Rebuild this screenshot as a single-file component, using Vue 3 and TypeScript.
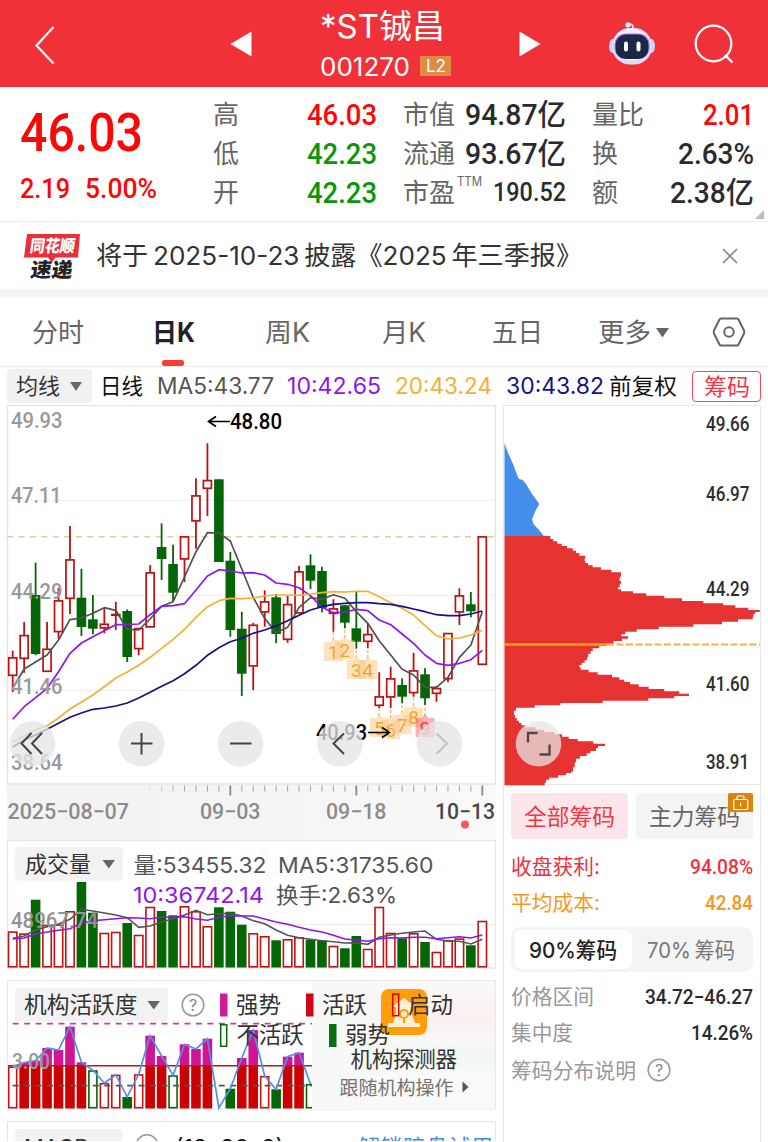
<script setup lang="ts">
import { h } from 'vue'

// Single line of text set to an exact measure
interface FitProps { t: string; w: number; s: number }
const FitText = (p: FitProps) =>
  h('svg', { width: p.w, height: p.s, viewBox: `0 0 ${p.w} ${p.s}`, overflow: 'visible' }, [
    h('text', { x: 0, y: p.s * 0.865, 'font-size': p.s, textLength: p.w, lengthAdjust: 'spacingAndGlyphs', fill: 'currentColor', 'xml:space': 'preserve' }, p.t),
  ])

const X0 = 12.7
const STEP = 11.454
const cx = (i: number) => X0 + i * STEP

// kind (1 = rising), high, body top, body bottom, low
const candles: number[][] = [
  [1, 650.7, 657.3, 675.7, 692], [1, 622, 635, 658.7, 672.7], [0, 562.7, 595, 654, 655.3], [1, 622, 648.7, 671.7, 671.7],
  [1, 588, 600.3, 632, 638.7], [1, 526, 559.3, 598.7, 614], [0, 568.7, 597.7, 627, 636], [0, 595, 619.3, 628.7, 634.3],
  [1, 607.7, 623.7, 628.3, 633.3], [1, 601.7, 614, 615.6, 630], [0, 609.3, 611, 657, 662], [1, 628, 628, 649, 655.3],
  [1, 565, 572.3, 627.3, 627.3], [0, 523.3, 547, 559, 580], [0, 544.7, 564, 592.7, 601], [1, 536.3, 536.3, 559.3, 582],
  [1, 478.3, 495.3, 521.3, 548.7], [1, 443.3, 480, 488.7, 516], [0, 479.3, 479.3, 562, 562], [0, 552, 560.7, 630, 636.7],
  [0, 611.7, 628.7, 673.7, 696], [1, 622.7, 624.7, 666.3, 690], [1, 590.3, 601.3, 612.3, 626.7], [0, 594, 597.3, 634, 643.3],
  [1, 596, 604, 639.7, 642.7], [1, 565.7, 571.3, 613.3, 613.3], [0, 554.3, 565.3, 580.7, 589], [0, 566.7, 571, 608, 612.3],
  [1, 599.3, 608.3, 613.7, 631.7], [0, 605.3, 605.3, 622.7, 628.3], [0, 592, 628.3, 641.7, 648.7], [1, 623, 634, 641.7, 648.3],
  [1, 672.3, 696.3, 705.7, 708], [1, 666.7, 678.3, 697.3, 708], [0, 678.3, 685, 696.7, 703.3], [1, 652.7, 670.3, 693, 696.7],
  [0, 668.3, 674.3, 698.3, 705], [1, 686, 688, 693.7, 701.7], [1, 633, 633, 679, 682.3], [1, 588.3, 595.3, 612.3, 625],
  [0, 592, 604.3, 611.3, 617.3], [1, 536.3, 536.3, 664.7, 664.7],
]
const ma5 = [688, 669, 662, 655, 640, 619.7, 618, 613.3, 607.7, 610.3, 629.3, 630, 619, 606.3, 601.7, 577, 551.7, 532.7, 533, 541, 569, 597.3, 618.3, 632.7, 627.3, 607.3, 597.7, 599.3, 594.7, 598.3, 611.7, 623.3, 640.7, 655, 669.3, 675, 687.3, 687.3, 677.3, 657.3, 645, 611.7]
const ma10 = [719.3, 706.7, 697.7, 688.3, 671.7, 653.3, 643, 636.7, 630.7, 624.7, 624.5, 624, 614.7, 606.3, 605.7, 603.7, 590, 576, 569.7, 571, 573, 572.7, 575, 583, 584.3, 587.7, 595.7, 607.3, 612.7, 612.3, 609.3, 610.7, 620, 624.7, 634, 643.3, 655, 663.3, 665.3, 663.3, 659.7, 650.3]
const ma20 = [742.3, 735.7, 730, 725.7, 718, 709, 702, 695, 686.7, 678, 672, 665.3, 657.3, 648.3, 639.3, 629.3, 617.3, 606.7, 600.7, 598.3, 598.6, 598, 596, 595, 595, 595.3, 594, 592.7, 591.7, 592, 591.3, 591.3, 596.7, 602.7, 608.3, 615, 625.7, 635.7, 639, 638, 635, 630.3]
const ma30 = [747, 740, 735, 729.3, 723.3, 717.3, 713, 709.3, 708, 706, 703, 698, 692.3, 686.3, 680.7, 673.7, 665.3, 655.3, 647.7, 641.7, 638.3, 633.3, 630, 626, 620.7, 615.3, 610, 606.7, 604.3, 603.3, 602.7, 602.7, 603.7, 604.3, 606.3, 609, 611.7, 614.7, 615.7, 615.7, 614, 611]
const line = (ys: number[]) => ys.map((y, i) => `${cx(i).toFixed(1)},${y}`).join(' ')

const volumes: number[] = [931.3, 933.3, 899.7, 924.7, 924.3, 911, 882, 912.7, 932.7, 931.7, 923, 934.7, 906.7, 911, 915.3, 906, 911, 926, 907.3, 911.7, 924.7, 933, 936, 940.3, 939, 937, 939.7, 940.3, 945.7, 948.3, 936, 948.7, 906.7, 932.7, 938.3, 933, 942, 951.7, 940, 938.3, 945.3, 920.7]
const vma5 = [938.3, 936, 930, 926.7, 924, 919.3, 909.3, 911, 913, 915, 917.7, 927.3, 926, 922, 918.7, 915, 910.3, 914.7, 913.7, 913.3, 916, 920.7, 923.7, 930, 935.3, 937.7, 939.3, 940.7, 941.7, 943, 942.7, 944.3, 937.3, 935, 933.3, 932, 931, 939.3, 941, 941.2, 944, 939.3]
const vma10 = [939, 938, 934, 932, 930.3, 928.7, 923, 920.7, 919.7, 918.7, 917.7, 918, 918.7, 917.3, 917, 916.7, 919, 920.3, 917.3, 915.7, 916, 916, 919, 922, 924.3, 927.3, 930, 932, 935.3, 939, 940, 941.3, 938.7, 937.7, 938, 937.3, 937.3, 938.7, 937.7, 936.7, 938, 935]

// f = filled active, r = outlined red, o = outlined green, g = filled green, n = none
const activity: [string, number][] = [['r', 1066.5], ['f', 1062.7], ['f', 1060.7], ['f', 1048], ['f', 1050], ['f', 1026.7], ['f', 1062.3], ['o', 1070.3], ['r', 1083], ['r', 1074.7], ['g', 1097], ['r', 1074.3], ['f', 1035.7], ['f', 1056], ['o', 1075.3], ['f', 1044.3], ['f', 1049], ['f', 1038.7], ['n', 1108], ['g', 1088.7], ['f', 1058], ['f', 1030], ['r', 1076], ['g', 1089.3], ['f', 1056.7], ['f', 1052.7], ['o', 1084]]

const td: [string, number, number][] = [['1', 28, 652], ['2', 29, 650], ['3', 30, 670], ['4', 31, 670], ['5', 32, 728], ['6', 33, 730], ['7', 34, 725], ['8', 35, 717.5], ['9', 36, 728]]

const chips: [number, number][] = [[408, 163], [417, 172], [424, 184], [431, 197], [438, 213], [445, 230], [452, 240], [459, 250], [467, 268], [475, 266], [483, 268], [489, 276], [496, 290], [502, 315], [509, 346], [517, 375], [530, 371], [543, 375], [551, 371], [562, 366], [568, 375], [574, 411], [580, 451], [587, 505], [595, 558], [603, 622], [610, 682], [616, 718], [623, 757], [630, 791], [636, 777], [642, 772], [651, 770], [658, 726], [665, 678], [673, 592], [680, 488], [688, 422], [695, 388], [703, 376], [709, 396], [716, 378], [723, 352], [731, 330], [738, 310], [745, 290], [753, 284], [761, 277], [772, 273], [781, 266], [788, 257], [795, 250], [802, 254], [809, 278], [817, 305], [824, 348], [832, 370], [839, 385], [846, 402], [853, 428], [860, 458], [867, 505], [874, 550], [881, 579], [888, 535], [895, 457], [902, 320], [909, 193], [916, 116], [923, 60], [932, 54], [945, 57], [954, 62], [962, 69], [969, 76], [976, 88], [982, 118], [989, 145], [996, 175], [1003, 198], [1010, 218], [1017, 245], [1024, 292], [1031, 327], [1038, 306], [1045, 300], [1053, 283], [1060, 272], [1068, 252], [1076, 240], [1087, 236], [1102, 231], [1115, 225], [1119, 210], [1126, 186], [1133, 160], [1139, 150], [1148, 146], [1156, 146]]
const px = (v: number) => (496 + v / 3).toFixed(1)
const py = (v: number) => (400 + v / 3).toFixed(1)
const chipPath = `M504.5 ${py(408)}` + chips.map(([y, x]) => `V${py(y)}H${px(x)}`).join('').replace(/^V[\d.]+/, '') + 'H504.5Z'

const tabs = [{ t: '分时', w: 52 }, { t: '日K', w: 43 }, { t: '周K', w: 45 }, { t: '月K', w: 44 }, { t: '五日', w: 51 }]
const ticks = Array.from({ length: 30 }, (_, i) => i + 12)
</script>

<template>
  <div class="app">
    <header class="top">
      <svg class="back" width="20" height="40" viewBox="0 0 20 40"><path d="M18.5 2 1.5 20.500 18.500 38.500" fill="none" stroke="#fff" stroke-width="2.200" /></svg>
      <svg class="prev" width="22" height="26" viewBox="0 0 22 26"><path d="M21.500.5v25L.5 13Z" fill="#fff" /></svg>
      <div class="name">
        <FitText t="*ST铖昌" :w="125" :s="33" />
        <div class="code"><FitText t="001270" :w="90" :s="26" /><span class="l2"><FitText t="L2" :w="20" :s="17" /></span></div>
      </div>
      <svg class="next" width="22" height="26" viewBox="0 0 22 26"><path d="M.5.5v25L21.500 13Z" fill="#fff" /></svg>
      <svg class="robot" width="48" height="46" viewBox="608 21 48 46">
        <path d="M632.500 29q2-5-4-5" fill="none" stroke="#e5e0fa" stroke-width="1.800" />
        <circle cx="628" cy="24.800" r="2.600" fill="#f3efff" />
        <ellipse cx="612.500" cy="46" rx="3.500" ry="7" fill="#c9d2fa" /><ellipse cx="651.500" cy="46" rx="3.500" ry="7" fill="#c9d2fa" />
        <rect x="612" y="28" width="40" height="36.500" rx="18" fill="#dcdcf8" />
        <rect x="614" y="28.500" width="35" height="32" rx="16" fill="#f1effd" />
        <rect x="614.500" y="33.500" width="35" height="25.500" rx="11" fill="#a57bf0" />
        <rect x="615.500" y="34.500" width="33" height="24.500" rx="10.500" fill="#1c2746" />
        <rect x="624" y="41.500" width="4" height="10" rx="2" fill="#fff" /><rect x="636.500" y="41.500" width="4" height="10" rx="2" fill="#fff" />
      </svg>
      <svg class="search" width="42" height="42" viewBox="693 23 42 42"><circle cx="713.500" cy="43.500" r="17.800" fill="none" stroke="#fff" stroke-width="2.200" /><path d="m725 55 7.500 7.500" stroke="#fff" stroke-width="2.400" /></svg>
    </header>

    <section class="quote">
      <div class="price din red">
        <FitText t="46.03" :w="123" :s="54" />
        <div class="delta"><FitText t="2.19" :w="50" :s="28" /><FitText t="5.00%" :w="72" :s="28" /></div>
      </div>
      <div class="stats s1">
        <div><FitText class="lab" t="高" :w="26" :s="26" /><FitText class="din red" t="46.03" :w="70" :s="29.5" /></div>
        <div><FitText class="lab" t="低" :w="26" :s="26" /><FitText class="din green" t="42.23" :w="70" :s="29.5" /></div>
        <div><FitText class="lab" t="开" :w="26" :s="26" /><FitText class="din green" t="42.23" :w="70" :s="29.5" /></div>
      </div>
      <div class="stats s2">
        <div><FitText class="lab" t="市值" :w="52" :s="26" /><FitText class="din" t="94.87亿" :w="101" :s="29.5" /></div>
        <div><FitText class="lab" t="流通" :w="52" :s="26" /><FitText class="din" t="93.67亿" :w="101" :s="29.5" /></div>
        <div><span class="pe"><FitText class="lab" t="市盈" :w="52" :s="26" /><FitText class="lab ttm" t="TTM" :w="25" :s="13" /></span><FitText class="din" t="190.52" :w="73" :s="25" /></div>
      </div>
      <div class="stats s3">
        <div><FitText class="lab" t="量比" :w="52" :s="26" /><FitText class="din red" t="2.01" :w="51" :s="29.5" /></div>
        <div><FitText class="lab" t="换" :w="26" :s="26" /><FitText class="din" t="2.63%" :w="76" :s="29.5" /></div>
        <div><FitText class="lab" t="额" :w="26" :s="26" /><FitText class="din" t="2.38亿" :w="84" :s="29.5" /></div>
      </div>
      <i class="corner"></i>
    </section>

    <section class="notice">
      <svg width="56" height="48" viewBox="23.500 230.500 56 48" overflow="visible">
        <path d="M26.500 232.500h53l-2 23.500H55l-4 5-3.500-5h-24Z" fill="#e93038" />
        <g font-weight="900" transform="skewX(-8)"><text x="64" y="250.500" font-size="17" fill="#fff" textLength="45" lengthAdjust="spacingAndGlyphs">同花顺</text>
        <text x="68" y="275.500" font-size="20" fill="#222" textLength="42" lengthAdjust="spacingAndGlyphs">速递</text></g>
      </svg>
      <FitText class="headline" t="将于&#8201;2025-10-23&#8201;披露《2025&#8201;年三季报》" :w="486" :s="26" />
      <svg class="close" width="16" height="16" viewBox="0 0 16 16"><path d="m1 1 14 14m0-14L1 15" stroke="#888" stroke-width="1.700" /></svg>
    </section>

    <nav class="tabs">
      <span v-for="(tab, i) in tabs" :key="tab.t" :class="{ on: i === 1 }"><FitText :t="tab.t" :w="tab.w" :s="26.500" /></span>
      <span class="more"><FitText t="更多" :w="53" :s="26.500" /><svg width="13" height="10" viewBox="0 0 13 10"><path d="M0 0h13L6.500 9.500Z" fill="#666" /></svg></span>
      <svg width="34" height="32" viewBox="0 0 34 32"><path d="M9 2.500h16q1 0 1.500 1L32 14.500q.6 1.500 0 3l-5.500 11q-.5 1-1.500 1H9q-1 0-1.500-1L2 17.500q-.6-1.500 0-3l5.500-11q.5-1 1.500-1Z" fill="none" stroke="#666" stroke-width="2" /><circle cx="17" cy="16" r="4.800" fill="none" stroke="#666" stroke-width="2" /></svg>
    </nav>

    <div class="mabar">
      <span class="pick"><FitText t="均线" :w="44" :s="22" /><svg width="12" height="9" viewBox="0 0 12 9"><path d="M0 0h12L6 9Z" fill="#666" /></svg></span>
      <FitText class="black" t="日线" :w="43" :s="22" />
      <FitText class="c5" t="MA5:43.77" :w="117" :s="22.500" />
      <FitText class="c10" t="10:42.65" :w="94" :s="22.500" />
      <FitText class="c20" t="20:43.24" :w="97" :s="22.500" />
      <FitText class="c30" t="30:43.82" :w="98" :s="22.500" />
      <FitText class="black" t="前复权" :w="68" :s="22" />
      <span class="chipbtn"><FitText t="筹码" :w="46" :s="23" /></span>
    </div>

    <main class="board">
      <div class="left">
        <svg class="kline" width="496" height="435" viewBox="0 405 496 435">
          <defs>
            <linearGradient id="axisbg"><stop offset="0" stop-color="#f3f3f3" /><stop offset=".3" stop-color="#f3f3f3" /><stop offset="1" stop-color="#f9f9f9" /></linearGradient>
          </defs>
          <rect x="7" y="784" width="489" height="56" fill="url(#axisbg)" />
          <rect x="7.500" y="405.500" width="488" height="378.500" fill="#fff" stroke="#e4e4e4" stroke-width="1.400" />
          <path d="M8 500.300H495M8 595.300H495M8 690.300H495" stroke="#ededed" />
          <path d="M7 536.700H495" stroke="#e3c9a4" stroke-width="1.400" stroke-dasharray="6 5.450" />
          <g v-for="(c, i) in candles" :key="i">
            <template v-if="c[0]">
              <path :d="`M${cx(i)} ${c[1]}V${c[2]}M${cx(i)} ${c[3]}V${c[4]}`" stroke="#bd1111" stroke-width="1.800" />
              <rect :x="cx(i) - 4" :y="c[2] + .6" width="8" :height="Math.max(.4, c[3] - c[2] - 1)" fill="#fff" stroke="#bd1111" stroke-width="1.700" />
            </template>
            <template v-else>
              <path :d="`M${cx(i)} ${c[1]}V${c[4]}`" stroke="#066506" stroke-width="1.800" />
              <rect :x="cx(i) - 4.800" :y="c[2]" width="9.600" :height="c[3] - c[2]" fill="#066506" />
            </template>
          </g>
          <g font-size="19" text-anchor="middle" class="dinr">
            <g v-for="b in td" :key="b[0]">
              <path :d="`M${cx(b[1])} ${b[2] - 20}V${b[2] - 10}`" stroke="#f3b963" stroke-width="1.300" stroke-dasharray="3 2" />
              <path :d="`M${cx(b[1]) - 9.500} ${b[2] - 10}h6.500l3-4 3 4h6.500v19h-19Z`" :fill="b[0] === '9' ? '#f45c5c' : '#f9c57c'" fill-opacity=".48" />
              <text :x="cx(b[1])" :y="b[2] + 6.500" :fill="b[0] === '9' ? '#e44655' : '#f4a32d'">{{ b[0] }}</text>
            </g>
          </g>
          <g fill="none" stroke-width="1.700" stroke-linejoin="round">
            <polyline :points="line(ma5)" stroke="#515151" /><polyline :points="line(ma10)" stroke="#8f14ee" />
            <polyline :points="line(ma20)" stroke="#f5b02e" /><polyline :points="line(ma30)" stroke="#11118c" />
          </g>
          <g class="dinr medium" font-size="21.500" fill="#999">
            <text x="11" y="427.500" textLength="51.500" lengthAdjust="spacingAndGlyphs">49.93</text>
            <text x="11" y="503.300" textLength="50.500" lengthAdjust="spacingAndGlyphs">47.11</text>
            <text x="11" y="598.500" textLength="51.500" lengthAdjust="spacingAndGlyphs">44.29</text>
            <text x="11" y="693.500" textLength="51.500" lengthAdjust="spacingAndGlyphs">41.46</text>
            <text x="11" y="769.700" textLength="51.500" lengthAdjust="spacingAndGlyphs">38.64</text>
          </g>
          <g class="dinr medium" font-size="21.500" fill="#000">
            <text x="230" y="429" textLength="52" lengthAdjust="spacingAndGlyphs">48.80</text>
            <text x="316" y="740.300" textLength="51" lengthAdjust="spacingAndGlyphs">40.93</text>
            <path d="M230 421.500H209m7-5-7.500 5 7.500 5M368 732.500h21m-7-5 7.500 5-7.500 5" fill="none" stroke="#000" stroke-width="1.700" />
          </g>
          <g fill="#e5e5e5" fill-opacity=".77"><circle v-for="x in [32.500, 141.500, 240.500, 340, 439.500]" :key="x" :cx="x" cy="743.800" r="22.800" /></g>
          <path d="M31.500 733 21.500 743.500l10 10.500M42 733 32 743.500 42 754M131 743.500h21.500M141.500 733v21.500M230 743.500h21.500M344 733.500l-10.500 10 10.500 10.500" fill="none" stroke="#444" stroke-width="2" />
          <path d="m436.500 733.500 10.500 10-10.500 10.500" fill="none" stroke="#c2c2c2" stroke-width="2" />
          <path v-for="i in ticks" :key="i" :d="`M${cx(i)} 785.500v${(i - 8) % 11 === 0 ? 10 : 6}`" :stroke="(i - 8) % 11 === 0 ? '#888' : '#aaa'" :stroke-width="(i - 8) % 11 === 0 ? 1.800 : 1.100" :opacity="Math.min(1, (i - 11) / 4)" />
          <g class="dinr medium" font-size="21.500" fill="#8c8c8c">
            <text x="7.500" y="819" textLength="121.500" lengthAdjust="spacing">2025−08−07</text>
            <text x="200" y="819" textLength="60.500" lengthAdjust="spacingAndGlyphs">09−03</text>
            <text x="326" y="819" textLength="60.500" lengthAdjust="spacingAndGlyphs">09−18</text>
            <text x="435" y="819" fill="#484848" textLength="60" lengthAdjust="spacingAndGlyphs">10−13</text>
          </g>
          <circle cx="465" cy="824.500" r="4" fill="#ee5a5f" />
        </svg>

        <svg width="496" height="140" viewBox="0 840 496 140">
          <path d="M7.500 968V840.500H495.500V968Z" fill="#fff" stroke="#e8e8e8" stroke-width="1.300" />
          <path d="M8 924.500H495" stroke="#ececec" />
          <g v-for="(v, i) in volumes" :key="i">
            <rect v-if="candles[i][0]" :x="cx(i) - 4.200" :y="v + .8" width="8.400" :height="966 - v" fill="#fff" stroke="#c31212" stroke-width="1.600" />
            <rect v-else :x="cx(i) - 4.800" :y="v" width="9.600" :height="967.500 - v" fill="#056605" />
          </g>
          <g fill="none" stroke-width="1.600"><polyline :points="line(vma5)" stroke="#555" /><polyline :points="line(vma10)" stroke="#8f14ee" /></g>
          <text class="dinr medium" x="11" y="927.800" font-size="21.500" fill="#929292" textLength="87" lengthAdjust="spacingAndGlyphs">48967.74</text>
          <rect x="15" y="847" width="108" height="33.500" rx="4" fill="#f2f2f2" />
          <text x="25" y="872" font-size="22" fill="#333" textLength="66" lengthAdjust="spacingAndGlyphs">成交量</text>
          <path d="M102.500 860H115l-6.200 8.500Z" fill="#666" />
          <g font-size="22" fill="#555">
            <text x="133.500" y="873" textLength="133" lengthAdjust="spacingAndGlyphs">量:53455.32</text>
            <text x="278" y="873" textLength="155.500" lengthAdjust="spacingAndGlyphs">MA5:31735.60</text>
            <text x="133" y="903.300" fill="#8f14ee" textLength="131" lengthAdjust="spacingAndGlyphs">10:36742.14</text>
            <text x="276" y="903.300" textLength="121" lengthAdjust="spacingAndGlyphs">换手:2.63%</text>
          </g>
        </svg>

        <svg width="496" height="141" viewBox="0 980 496 141">
          <defs>
            <linearGradient id="promo" x2="0" y2="1"><stop offset="0" stop-color="#f9f9f9" /><stop offset=".3" stop-color="#fbf0f0" /><stop offset=".45" stop-color="#f8f7f7" /><stop offset=".58" stop-color="#f0f6f4" /><stop offset=".75" stop-color="#f9f9f9" /></linearGradient>
            <linearGradient id="fade"><stop offset="0" stop-color="#f8f8f8" /><stop offset=".35" stop-color="#f8f8f8" /><stop offset="1" stop-color="#f8f8f8" stop-opacity="0" /></linearGradient>
            <clipPath id="act"><rect x="8" y="980" width="304" height="130" /></clipPath>
          </defs>
          <rect x="7.500" y="980.500" width="488" height="128.500" fill="#fff" stroke="#e8e8e8" />
          <g clip-path="url(#act)">
            <template v-for="(a, i) in activity" :key="i">
              <template v-if="a[0] === 'f'"><rect :x="cx(i) - 4.800" :y="a[1]" width="9.600" :height="1066 - a[1]" fill="#d01494" /><rect :x="cx(i) - 4.800" y="1065.500" width="9.600" height="43" fill="#ca0202" /></template>
              <rect v-else-if="a[0] === 'g'" :x="cx(i) - 4.800" :y="a[1]" width="9.600" :height="1108.500 - a[1]" fill="#056605" />
              <rect v-else-if="a[0] !== 'n'" :x="cx(i) - 4" :y="a[1] + .7" width="8" :height="1107 - a[1]" fill="#fff" :stroke="a[0] === 'o' ? '#056605' : '#ca1111'" stroke-width="1.600" />
            </template>
            <path d="M8 1065.700H312" stroke="#c81010" stroke-width="1.600" />
            <path d="M12.700 1023.700H312" stroke="#d03aa3" stroke-width="1.800" stroke-dasharray="6 5.450" />
            <path d="M12.700 1085.700H312" stroke="#555" stroke-width="1.700" stroke-dasharray="6 5.450" />
            <polyline :points="line(activity.map(a => a[1]))" fill="none" stroke="#5590e8" stroke-width="1.700" />
            <text class="dinr medium" x="12" y="1068.500" font-size="21.500" fill="#999" textLength="38" lengthAdjust="spacingAndGlyphs">3.00</text>
          </g>
          <rect x="312" y="981" width="183" height="127.500" fill="url(#promo)" /><rect x="312" y="981" width="90" height="127.500" fill="url(#fade)" />
          <rect x="381" y="989" width="46" height="46" rx="8" fill="#ff9d0d" />
          <path d="m404 998 11 9h-3v8l3 8h5v4h-32v-4h5l3-8v-8h-4Z" fill="#fff1d6" /><circle cx="404" cy="1014" r="4" fill="#fff1d6" stroke="#ff9d0d" stroke-width="2" /><path d="M404 1018v5" stroke="#ff9d0d" stroke-width="2" />
          <rect x="15" y="988" width="153" height="33.500" rx="4" fill="#f2f2f2" />
          <path d="M147.500 1001H160l-6.200 8.500Z" fill="#666" />
          <circle cx="193" cy="1005" r="10.800" fill="none" stroke="#999" stroke-width="1.500" />
          <text x="193" y="1011" font-size="16" text-anchor="middle" fill="#888">?</text>
          <rect x="220" y="993.500" width="7.500" height="23" fill="#cf1a9b" /><rect x="306" y="993.500" width="7.500" height="23" fill="#cf0617" />
          <g fill="none" stroke-width="1.500"><rect x="392.700" y="994.200" width="6" height="21.500" stroke="#ca0a0a" /><rect x="220.700" y="1024.800" width="6" height="21.500" stroke="#056605" /></g>
          <rect x="329" y="1024" width="7.500" height="23" fill="#05700d" />
          <g font-size="22.500" fill="#333">
            <text x="24" y="1013" textLength="113.500" lengthAdjust="spacingAndGlyphs">机构活跃度</text>
            <text x="236" y="1012.500">强势</text><text x="322" y="1012.500">活跃</text><text x="408" y="1012.500">启动</text>
            <text x="236.500" y="1043" textLength="67">不活跃</text><text x="345" y="1043">弱势</text>
            <text x="350.500" y="1067" font-size="21.500" textLength="106.500">机构探测器</text>
            <text x="339.500" y="1094.500" font-size="19" fill="#737373" textLength="114">跟随机构操作</text>
          </g>
          <path d="M462.500 1081.500v11l6-5.500Z" fill="#555" />
        </svg>

        <svg width="496" height="20" viewBox="0 1121 496 20">
          <path d="M7.500 1142V1121.500H495.500V1142" fill="none" stroke="#e4e4e4" />
          <rect x="15" y="1129" width="107" height="33" rx="4" fill="#f2f2f2" />
          <g font-size="22" fill="#333">
            <text x="24" y="1154.500" textLength="66" lengthAdjust="spacingAndGlyphs">MACD</text>
            <text x="175" y="1154.500" fill="#111" textLength="109" lengthAdjust="spacingAndGlyphs">(12, 26, 9)</text>
            <text x="358" y="1155" fill="#4686ef" textLength="135">解锁暗盘试用</text>
          </g>
          <circle cx="147" cy="1145.500" r="10.800" fill="none" stroke="#999" stroke-width="1.500" />
        </svg>
      </div>

      <aside class="right">
        <svg width="258" height="381" viewBox="503 405 258 381">
          <path d="M503.500 786V405.500H760.500V786M504 784.500h256" fill="none" stroke="#e8e8e8" />
          <path d="M504.500 443 508 453 513 464 518.600 478.700 522.700 480 526 484 532 494 539.300 503.700 535 512 532 519.300 533.500 524 539 530 544.300 536.500H504.500Z" fill="#448fec" />
          <path :d="chipPath" fill="#e63230" />
          <path d="M504 644.500H607" stroke="#ffa114" stroke-width="2.300" /><path d="M607 644.500H760" stroke="#f5b04d" stroke-width="2" stroke-dasharray="7 2.500" />
          <g class="dinr medium" font-size="19.500" fill="#2d2f33">
            <text x="706" y="430.500" textLength="43.500" lengthAdjust="spacingAndGlyphs">49.66</text>
            <text x="706" y="500.700" textLength="43.500" lengthAdjust="spacingAndGlyphs">46.97</text>
            <text x="706" y="595.900" textLength="43.500" lengthAdjust="spacingAndGlyphs">44.29</text>
            <text x="706" y="690.900" textLength="43.500" lengthAdjust="spacingAndGlyphs">41.60</text>
            <text x="706" y="768.800" textLength="43" lengthAdjust="spacingAndGlyphs">38.91</text>
          </g>
          <circle cx="538.500" cy="743.700" r="22.800" fill="#e5e5e5" fill-opacity=".75" />
          <path d="M528 742.500v-9.500h9.500M539.500 754.500h10V744.500" fill="none" stroke="#514545" stroke-width="2.300" />
        </svg>
        <div class="panel">
          <div class="pair">
            <span class="all"><FitText t="全部筹码" :w="91" :s="23" /></span>
            <span class="main"><FitText t="主力筹码" :w="91" :s="23" />
              <svg class="lock" width="25" height="19" viewBox="0 0 25 19"><path d="M2 0h21q2 0 2 2v17H0V2q0-2 2-2Z" fill="#dc8410" /><rect x="5.700" y="6.500" width="14" height="10" rx="1" fill="none" stroke="#fff" stroke-width="1.200" /><path d="M9 6.500V4.500q0-1.500 1.500-1.500h4q1.500 0 1.500 1.500v2M12.600 9.800v3.500" fill="none" stroke="#fff" stroke-width="1.200" /></svg>
            </span>
          </div>
          <div class="kv r1 rose"><FitText t="收盘获利:" :w="89" :s="21" /><FitText class="din rose" t="94.08%" :w="63" :s="21" /></div>
          <div class="kv r2 orange"><FitText t="平均成本:" :w="89" :s="21" /><FitText class="din orange" t="42.84" :w="48" :s="21" /></div>
          <div class="seg"><span class="sel"><FitText t="90%筹码" :w="88" :s="21.500" /></span><span><FitText t="70%&#8201;筹码" :w="88" :s="21.500" /></span></div>
          <div class="kv r3"><FitText t="价格区间" :w="83" :s="21" /><FitText class="din" t="34.72−46.27" :w="108" :s="20.500" /></div>
          <div class="kv r4"><FitText t="集中度" :w="62" :s="21" /><FitText class="din" t="14.26%" :w="62" :s="20.500" /></div>
          <div class="kv r5"><FitText t="筹码分布说明" :w="125" :s="21" /><svg width="24" height="24" viewBox="0 0 24 24"><circle cx="12" cy="12" r="10.800" fill="none" stroke="#999" stroke-width="1.500" /><text x="12" y="18" font-size="16" text-anchor="middle" fill="#888">?</text></svg></div>
        </div>
      </aside>
    </main>
  </div>
</template>

<style>
body { margin: 0; background: #fff; }
</style>

<style scoped>
.app { width: 768px; height: 1142px; overflow: hidden; background: #fff; color: #333; font-family: Inter, "Noto Sans CJK SC", sans-serif; box-sizing: border-box; }
.app svg { display: block; flex: none; }
.din, .dinr { font-family: Roboto, "Noto Sans CJK SC", sans-serif; }
.din, .medium { font-weight: 500; }
.din { color: #2a2b2e; }
.red { color: #fc0606; }
.green { color: #0b950b; }
.rose { color: #f1303f; }
.orange { color: #f39a1e; }
.lab { color: #666; }
.top { height: 87px; background: #f03238; display: flex; align-items: center; color: #fff; box-sizing: border-box; padding-left: 35px; }
.back { margin-top: 2px; }
.prev { margin-left: 175px; }
.name { width: 220px; padding-left: 68px; box-sizing: border-box; display: flex; flex-direction: column; margin-right: 47px; gap: 11px; }
.code { display: flex; align-items: center; gap: 10px; }
.l2 { width: 31px; height: 20px; background: #e08b45; display: flex; align-items: center; justify-content: center; }
.robot { margin-left: 67px; }
.search { margin-left: 37px; }
.quote { height: 134px; display: flex; position: relative; box-sizing: border-box; padding: 7px 14px 9px 19.500px; }
.price { width: 193px; padding-top: 9.500px; }
.price.din { color: #fc0606; }
.delta { display: flex; gap: 15px; margin-top: 16.500px; }
.stats { display: grid; grid-template-rows: repeat(3, 39px); }
.stats > div { display: flex; justify-content: space-between; align-items: center; }
.s1 { width: 164px; margin-right: 26px; }
.s2 { width: 163px; margin-right: 26px; }
.s3 { width: 162px; }
.din.red { color: #fc0606; }
.din.green { color: #0b950b; }
.din.rose { color: #f1303f; }
.din.orange { color: #f39a1e; }
.pe { display: flex; gap: 2px; }
.ttm { margin-top: -4px; }
.corner { position: absolute; right: 4px; bottom: 2px; border-left: 9px solid transparent; border-bottom: 9px solid #bbb; }
.notice { height: 76px; border-top: 1.500px solid #ececec; border-bottom: 8px solid #f4f4f4; box-sizing: border-box; display: flex; align-items: center; padding-left: 23.500px; }
.headline { margin-left: 16px; margin-top: -1px; color: #333; }
.close { margin-left: 140px; }
.tabs { height: 70px; display: grid; grid-template-columns: 120px 113px 117px 110px 106px 114px 34px; align-items: center; padding-left: 32px; box-sizing: border-box; border-bottom: 1px solid #ececec; color: #666; }
.tabs span { height: 69px; display: flex; align-items: center; position: relative; box-sizing: border-box; padding-top: 2px; }
.tabs .on { color: #222; font-weight: 700; }
.tabs .on::after { content: ""; position: absolute; left: 10px; bottom: 0; width: 22px; height: 6px; border-radius: 2.500px; background: #fb3a31; }
.tabs .more { gap: 5px; }
.mabar { height: 38px; display: grid; grid-template-columns: 93px 57px 130px 108px 111px 103px 83px 69px; align-items: center; padding-left: 7px; box-sizing: border-box; }
.pick { width: 85px; height: 34px; border-radius: 4px; background: #f1f1f1; display: flex; align-items: center; gap: 10px; padding-left: 9px; box-sizing: border-box; }
.black { color: #111; }
.c5 { color: #555; }
.c10 { color: #8f14ee; }
.c20 { color: #f5b02e; }
.c30 { color: #11118c; }
.chipbtn { height: 31px; width: 69px; border: 1.500px solid #f04a58; border-radius: 4px; color: #f23645; display: flex; align-items: center; justify-content: center; box-sizing: border-box; }
.board { display: flex; height: 737px; overflow: hidden; }
.left { width: 503px; }
.right { width: 258px; }
.panel { height: 356px; border-left: 1px solid #e8e8e8; border-right: 1px solid #e8e8e8; box-sizing: border-box; padding: 7px 7px 0; }
.pair { display: flex; gap: 8px; }
.pair span { width: 117px; height: 46px; border-radius: 4px; display: flex; align-items: center; box-sizing: border-box; padding-left: 13px; position: relative; }
.all { background: #fde6e9; color: #f23645; }
.main { background: #f4f4f4; color: #666; }
.lock { position: absolute; right: 0; top: 0; }
.kv { display: flex; justify-content: space-between; align-items: center; height: 36px; color: #999; }
.kv.rose { color: #f1303f; }
.kv.orange { color: #f39a1e; }
.r1 { margin-top: 9px; }
.seg { margin-top: 7px; height: 45px; border-radius: 10px; background: #f4f4f4; display: flex; align-items: center; padding: 3px; box-sizing: border-box; color: #777; }
.seg span { width: 118px; height: 39px; display: flex; align-items: center; justify-content: center; border-radius: 8px; }
.seg .sel { background: #fff; color: #222; font-weight: 500; }
.r3 { margin-top: 6px; }
.r5 { justify-content: flex-start; gap: 11px; margin-top: 2px; }
</style>
